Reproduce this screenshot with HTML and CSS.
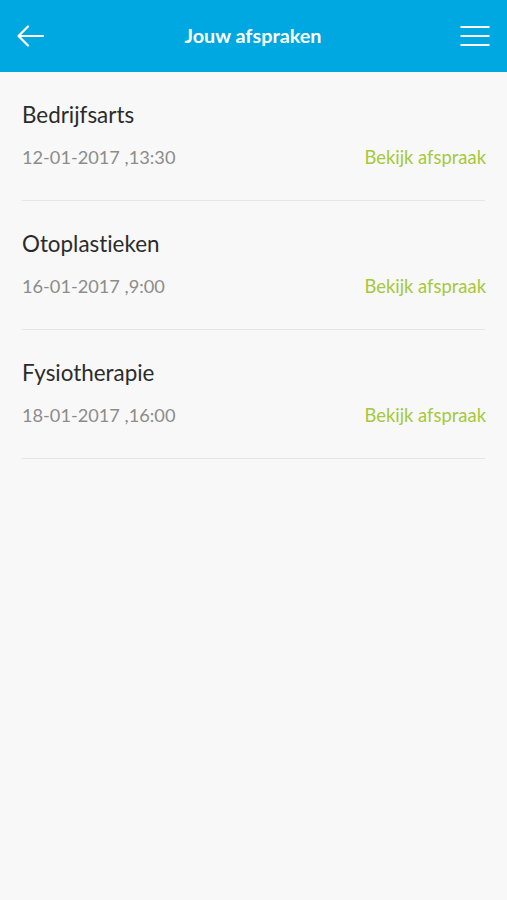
FILE: index.html
```html
<!DOCTYPE html>
<html lang="nl">
<head>
<meta charset="utf-8">
<title>Jouw afspraken</title>
<link rel="stylesheet" href="styles.css">
</head>
<body>
<header class="topbar">
  <button class="icon-btn back" aria-label="Terug">
    <svg width="28" height="22" viewBox="0 0 28 22"><path d="M12 1.5 L2.5 11 L12 20.5 M2.5 11 H27" fill="none" stroke="#fff" stroke-width="2.2" stroke-linecap="round" stroke-linejoin="round"/></svg>
  </button>
  <h1 class="title">Jouw afspraken</h1>
  <button class="icon-btn menu" aria-label="Menu">
    <svg width="30" height="22" viewBox="0 0 30 22"><path d="M0.5 2 H29.5 M0.5 11 H29.5 M0.5 20 H29.5" fill="none" stroke="#fff" stroke-width="2"/></svg>
  </button>
</header>
<main class="list">
  <div class="item">
    <div class="name">Bedrijfsarts</div>
    <div class="meta"><span class="date">12-01-2017 ,13:30</span><a class="link">Bekijk afspraak</a></div>
  </div>
  <div class="item">
    <div class="name">Otoplastieken</div>
    <div class="meta"><span class="date">16-01-2017 ,9:00</span><a class="link">Bekijk afspraak</a></div>
  </div>
  <div class="item">
    <div class="name">Fysiotherapie</div>
    <div class="meta"><span class="date">18-01-2017 ,16:00</span><a class="link">Bekijk afspraak</a></div>
  </div>
</main>
</body>
</html>
```
FILE: styles.css
```css
* { box-sizing: border-box; }
html, body { margin: 0; padding: 0; }
body {
  background: #f8f8f8;
  font-family: Lato, "Liberation Sans", sans-serif;
  font-variant-ligatures: none;
  min-height: 900px;
}
.topbar {
  height: 72px;
  background: #00a8e2;
  display: flex;
  align-items: center;
  justify-content: space-between;
  padding: 0 17px 0 16px;
}
.icon-btn {
  background: none;
  border: 0;
  padding: 0;
  width: 30px;
  height: 22px;
  display: flex;
  align-items: center;
}
.title {
  margin: 0 0 3px;
  color: #fff;
  font-size: 19.8px;
  font-weight: 700;
}
.list {
  padding: 0 22px;
}
.item {
  border-bottom: 1px solid #e6e6e6;
  padding: 28px 0 31px;
}
.name {
  font-size: 22.4px;
  color: #2b2b2b;
  line-height: 30px;
}
.meta {
  display: flex;
  justify-content: space-between;
  align-items: center;
  margin-top: 15px;
  font-size: 18.2px;
  line-height: 24px;
}
.date { color: #8c8c8c; }
.link { color: #a6c83a; margin-right: -1px; font-size: 18.4px; }
```
